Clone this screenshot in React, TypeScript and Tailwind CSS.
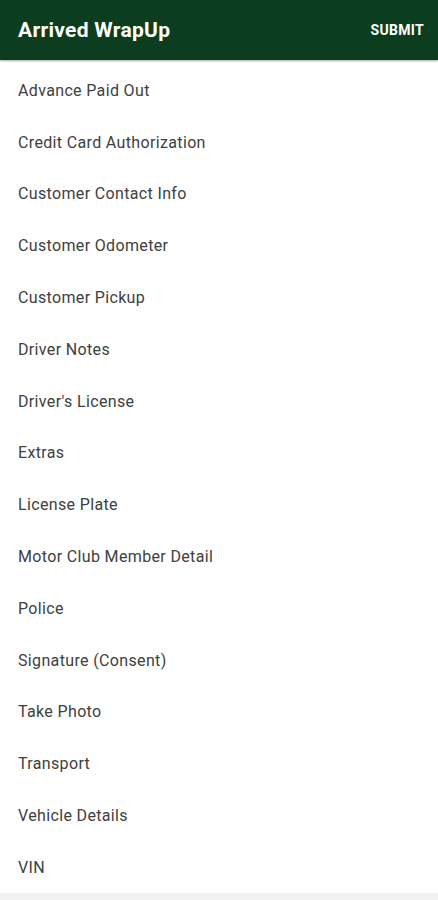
const items = [
  "Advance Paid Out",
  "Credit Card Authorization",
  "Customer Contact Info",
  "Customer Odometer",
  "Customer Pickup",
  "Driver Notes",
  "Driver's License",
  "Extras",
  "License Plate",
  "Motor Club Member Detail",
  "Police",
  "Signature (Consent)",
  "Take Photo",
  "Transport",
  "Vehicle Details",
  "VIN",
];

const App = () => {
  return (
    <div className="w-[438px] h-[900px] flex flex-col bg-[#f2f2f2] font-['Roboto',sans-serif] overflow-hidden">
      <header className="h-[60px] shrink-0 flex items-center justify-between pl-[18px] pr-[14px] bg-[#0b3d1e] shadow-[0_1px_2px_rgba(0,0,0,0.35)] z-10">
        <h1 className="text-[21px] font-bold text-white tracking-[0.3px] mt-[2px]">Arrived WrapUp</h1>
        <button className="text-[14px] font-bold text-white tracking-[0.3px]">SUBMIT</button>
      </header>
      <ul className="bg-white pt-[5px] h-[833px] shrink-0">
        {items.map((item) => (
          <li key={item} className="h-[51.8px] flex items-center pl-[18px] text-[16px] text-[#404040] tracking-[0.35px]">
            {item}
          </li>
        ))}
      </ul>
    </div>
  );
};

export default App;
